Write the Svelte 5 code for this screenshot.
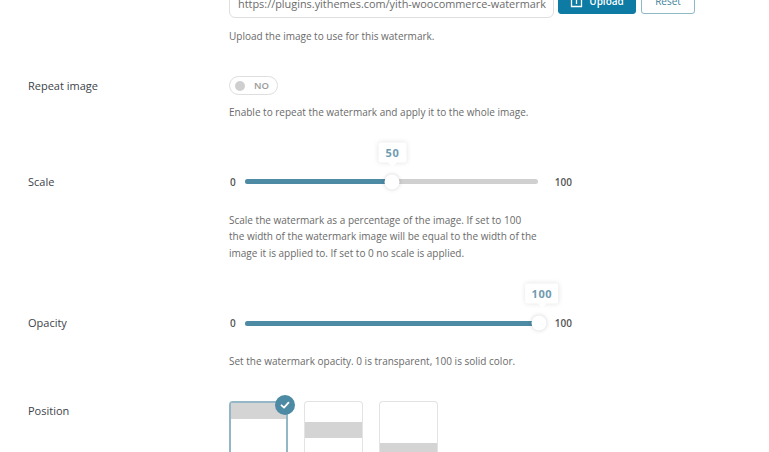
<script>
  const positions = [
    { id: 'top', selected: true },
    { id: 'middle', selected: false },
    { id: 'bottom', selected: false }
  ];
  const sliders = [
    { label: 'Scale', value: 50, desc: ['Scale the watermark as a percentage of the image. If set to 100', 'the width of the watermark image will be equal to the width of the', 'image it is applied to. If set to 0 no scale is applied.'], cls: 'scale' },
    { label: 'Opacity', value: 100, desc: ['Set the watermark opacity. 0 is transparent, 100 is solid color.'], cls: 'opacity' }
  ];
</script>

<main class="page">
  <section class="row upload-row">
    <div></div>
    <div class="field">
      <div class="upload">
        <div class="input"><span class="url">https://plugins.yithemes.com/yith-woocommerce-watermark-</span></div>
        <button class="btn primary">
          <svg width="13" height="13" viewBox="0 0 13 13" fill="none" stroke="#fff" stroke-width="1.3"><path d="M4 3.5H1.5v8h10v-8H9"/><path d="M6.5 9V1M4.2 3.2 6.5 1l2.3 2.2"/></svg>
          Upload
        </button>
        <button class="btn ghost">Reset</button>
      </div>
      <p class="desc first">Upload the image to use for this watermark.</p>
    </div>
  </section>

  <section class="row repeat-row">
    <div class="label toggle-label">Repeat image</div>
    <div class="field">
      <div class="toggle"><span class="dot"></span><span>NO</span></div>
      <p class="desc toggle-desc">Enable to repeat the watermark and apply it to the whole image.</p>
    </div>
  </section>

  {#each sliders as s}
    <section class="row slider-row {s.cls}">
      <div class="label slider-label">{s.label}</div>
      <div class="field">
        <div class="slider">
          <span class="end">0</span>
          <div class="track">
            <div class="fill" style="width:{s.value}%"></div>
            <div class="thumb" style="left:{s.value}%">
              <div class="tip">{s.value}</div>
            </div>
          </div>
          <span class="end max">100</span>
        </div>
        <div class="slider-desc">
          {#each s.desc as line}<p class="desc">{line}</p>{/each}
        </div>
      </div>
    </section>
  {/each}

  <section class="row position-row">
    <div class="label pos-label">Position</div>
    <div class="cards">
      {#each positions as p}
        <div class="card {p.id}" class:selected={p.selected}>
          <div class="band"></div>
          {#if p.selected}
            <span class="check">
              <svg width="12" height="12" viewBox="0 0 12 12" fill="none" stroke="#fff" stroke-width="1.8" stroke-linecap="round" stroke-linejoin="round"><path d="M2.5 6.3 5 8.6 9.5 3.6"/></svg>
            </span>
          {/if}
        </div>
      {/each}
    </div>
  </section>
</main>

<style>
  :global(body) {
    margin: 0;
    background: #fff;
    overflow: hidden;
    height: 452px;
  }
  .page {
    width: 769px;
    height: 470px;
    margin-top: -18px;
    overflow: hidden;
    box-sizing: border-box;
    padding-left: 28px;
    font-family: "Open Sans", "Liberation Sans", sans-serif;
    font-size: 10px;
    color: #5f6368;
  }
  .row {
    display: grid;
    grid-template-columns: 201px 1fr;
  }
  .label {
    font-size: 11px;
    line-height: 16px;
    color: #3c434a;
  }
  p { margin: 0; }
  .desc {
    line-height: 16.4px;
    font-size: 10px;
    color: #6a6a6a;
    white-space: nowrap;
  }
  .upload {
    display: flex;
    align-items: flex-start;
    gap: 4px;
    height: 36px;
  }
  .input {
    box-sizing: border-box;
    width: 325px;
    height: 28px;
    margin-top: 8px;
    line-height: 26px;
    padding: 0 8px;
    border: 1px solid #dedede;
    border-radius: 6px;
    font-size: 10.9px;
    color: #6b6b6b;
  }
  .url {
    display: block;
    width: 308px;
    white-space: nowrap;
    overflow: hidden;
  }
  .btn {
    box-sizing: border-box;
    font-family: inherit;
    font-size: 10px;
    font-weight: 600;
    border-radius: 3px;
    height: 26px;
    margin-top: 6px;
    padding: 0;
    display: flex;
    align-items: center;
    justify-content: center;
    gap: 6px;
  }
  .primary {
    width: 78px;
    background: #0d7ba3;
    border: 1px solid #0d7ba3;
    color: #fff;
  }
  .ghost {
    width: 54px;
    margin-left: 1px;
    background: #fff;
    border: 1px solid #8db8c6;
    color: #3e7f99;
    font-weight: 400;
  }
  .first { margin-top: 10px; }
  .repeat-row { margin-top: 32px; }
  .toggle-label { margin-top: 2px; }
  .toggle {
    box-sizing: border-box;
    width: 49px;
    height: 19px;
    border: 1px solid #dedede;
    border-radius: 10px;
    display: flex;
    align-items: center;
    gap: 9px;
    padding-left: 5px;
    font-size: 9.5px;
    font-weight: 600;
    color: #9a9a9a;
  }
  .dot {
    width: 10px;
    height: 10px;
    border-radius: 50%;
    background: #cfcfcf;
  }
  .toggle-desc { margin-top: 9px; }
  .slider-row.scale { margin-top: 52px; }
  .slider-row.opacity { margin-top: 53px; }
  .slider-label { margin-top: 1px; }
  .slider {
    width: 343px;
    height: 18px;
    display: flex;
    align-items: center;
  }
  .end {
    width: 16px;
    font-size: 10px;
    font-weight: 600;
    color: #555;
    line-height: 16px;
    padding-left: 1px;
    box-sizing: border-box;
  }
  .end.max {
    width: auto;
    margin-left: 17px;
    padding: 0;
  }
  .track {
    position: relative;
    width: 293px;
    height: 5px;
    border-radius: 3px;
    background: #d0d0d0;
  }
  .fill {
    height: 100%;
    border-radius: 3px;
    background: #4d8aa3;
  }
  .thumb {
    position: absolute;
    top: 50%;
    width: 15px;
    height: 15px;
    transform: translate(calc(-50% + 1px), -50%);
    border-radius: 50%;
    background: #fff;
    box-shadow: 0 0 4px rgba(0,0,0,.18);
  }
  .tip {
    position: absolute;
    left: 50%;
    bottom: 27px;
    transform: translateX(-50%);
    min-width: 28px;
    box-sizing: border-box;
    padding: 0 6px;
    height: 20px;
    line-height: 19px;
    text-align: center;
    background: #fff;
    border-radius: 2px;
    box-shadow: 0 0 5px rgba(0,0,0,.1);
    font-size: 11px;
    font-weight: 700;
    letter-spacing: .6px;
    color: #6f9bae;
  }
  .opacity .tip { transform: translateX(calc(-50% + 3px)); }
  .tip::after {
    content: "";
    position: absolute;
    left: 50%;
    bottom: -3px;
    width: 6px;
    height: 6px;
    transform: translateX(-50%) rotate(45deg);
    background: #fff;
  }
  .slider-desc { margin-top: 21px; }
  .opacity .slider-desc { margin-top: 21px; }
  .position-row { margin-top: 34px; }
  .pos-label { margin-top: 0; }
  .cards {
    display: flex;
    gap: 16px;
  }
  .card {
    position: relative;
    box-sizing: border-box;
    width: 59px;
    height: 80px;
    border: 1px solid #e3e3e3;
    border-bottom: none;
    border-radius: 4px 4px 0 0;
    background: #fff;
    margin-top: -2px;
  }
  .card.selected {
    border: 2px solid #93b7c4;
    border-bottom: none;
  }
  .band {
    position: absolute;
    left: 0;
    right: 0;
    height: 16px;
    background: #d4d4d4;
  }
  .top .band { top: 0; }
  .middle .band { top: 20px; }
  .bottom .band { top: 41px; }
  .check {
    position: absolute;
    top: -8px;
    right: -9px;
    width: 20px;
    height: 20px;
    border-radius: 50%;
    background: #4d8aa3;
    display: flex;
    align-items: center;
    justify-content: center;
  }
</style>
